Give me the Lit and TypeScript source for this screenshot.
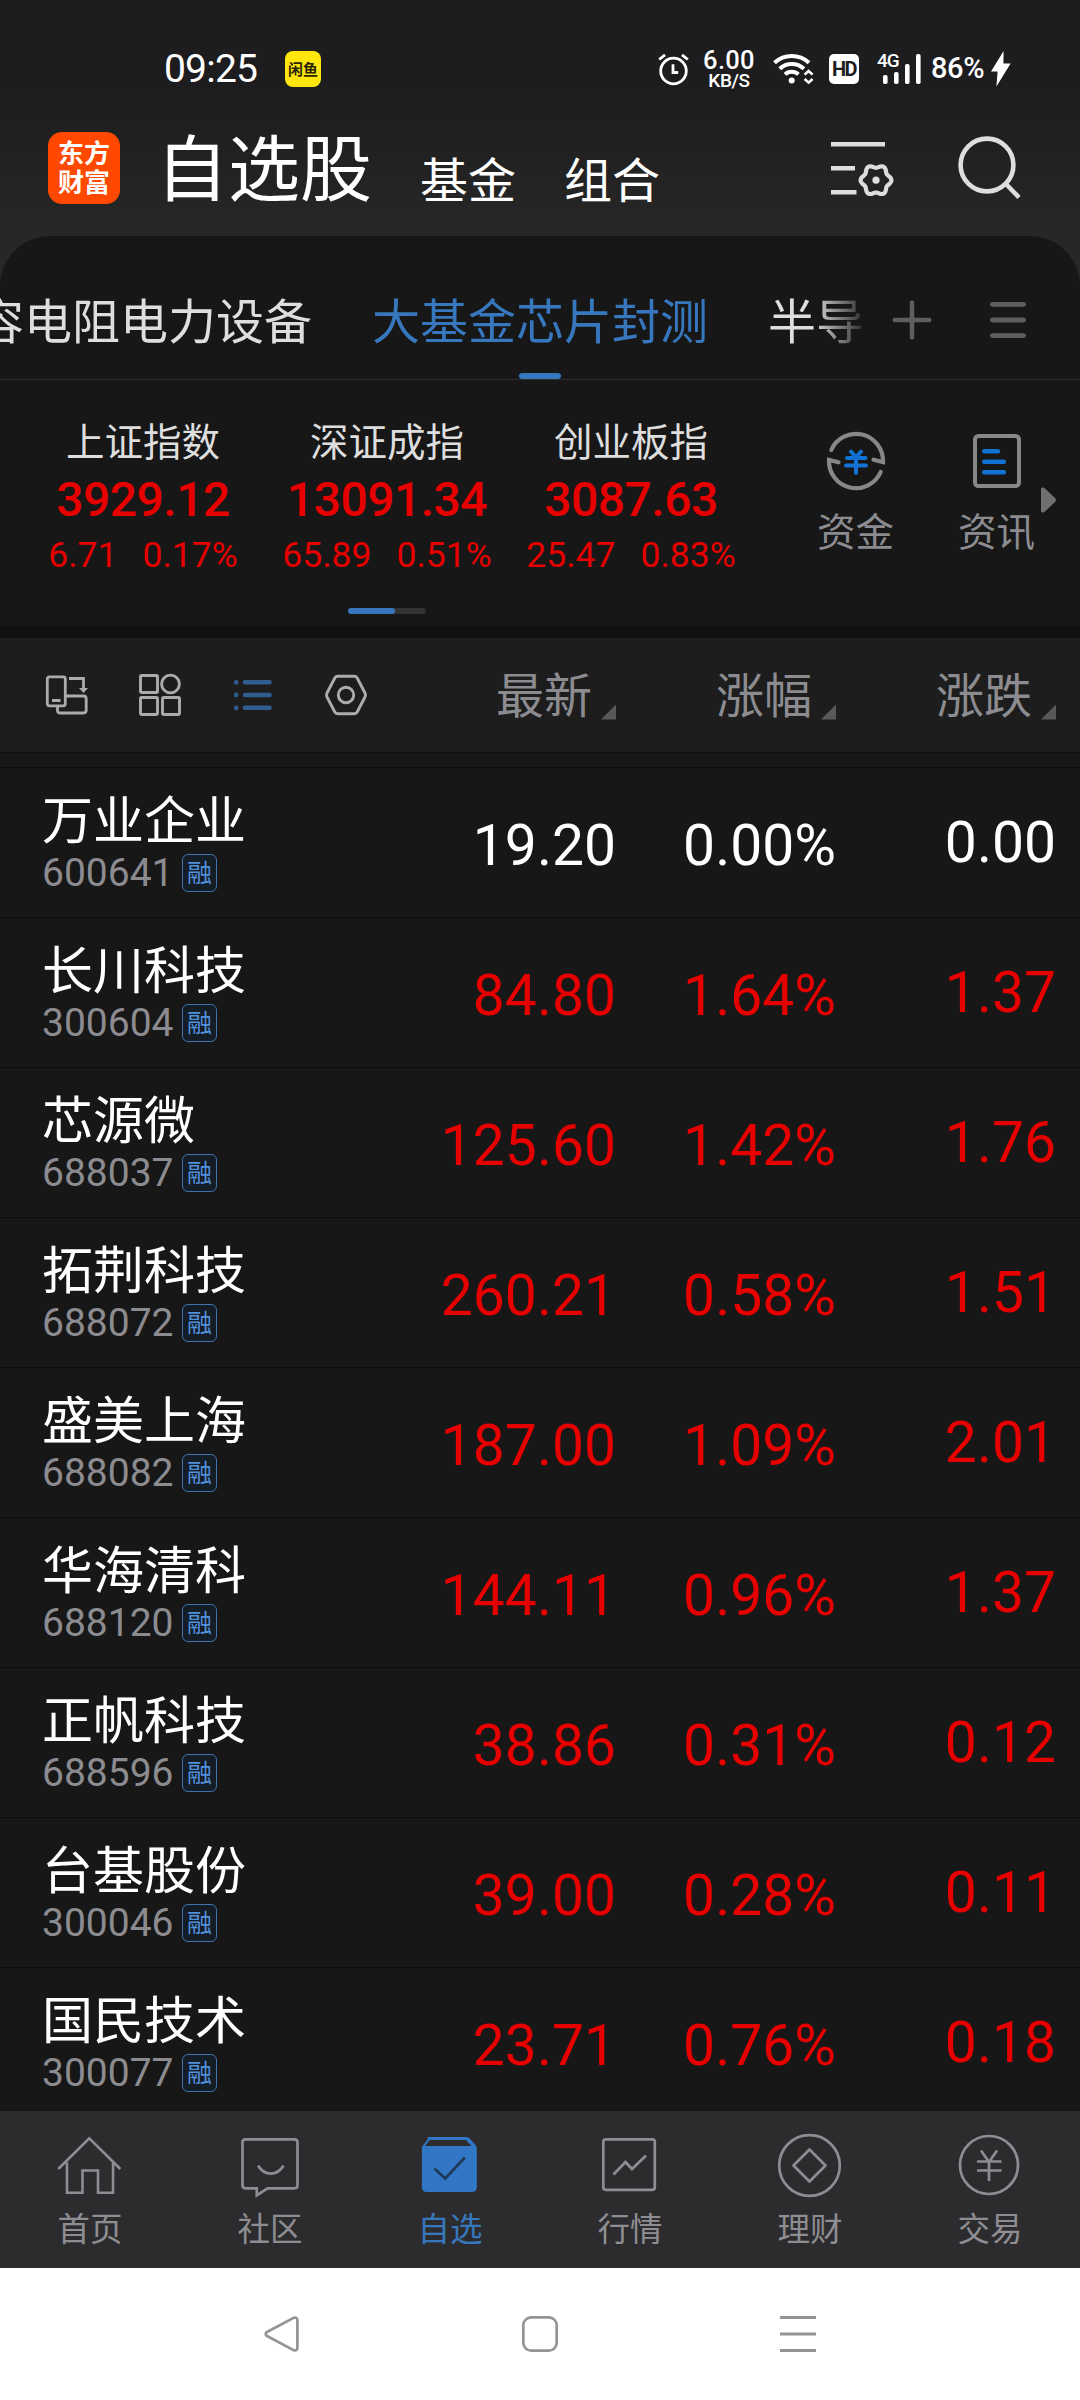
import { LitElement, html, css, svg } from "lit";
import { customElement, property } from "lit/decorators.js";
import { classMap } from "lit/directives/class-map.js";

interface Stock {
  name: string;
  code: string;
  price: string;
  pct: string;
  diff: string;
}

const STOCKS: Stock[] = [
  { name: "万业企业", code: "600641", price: "19.20", pct: "0.00%", diff: "0.00" },
  { name: "长川科技", code: "300604", price: "84.80", pct: "1.64%", diff: "1.37" },
  { name: "芯源微", code: "688037", price: "125.60", pct: "1.42%", diff: "1.76" },
  { name: "拓荆科技", code: "688072", price: "260.21", pct: "0.58%", diff: "1.51" },
  { name: "盛美上海", code: "688082", price: "187.00", pct: "1.09%", diff: "2.01" },
  { name: "华海清科", code: "688120", price: "144.11", pct: "0.96%", diff: "1.37" },
  { name: "正帆科技", code: "688596", price: "38.86", pct: "0.31%", diff: "0.12" },
  { name: "台基股份", code: "300046", price: "39.00", pct: "0.28%", diff: "0.11" },
  { name: "国民技术", code: "300077", price: "23.71", pct: "0.76%", diff: "0.18" },
];

const INDICES = [
  { name: "上证指数", value: "3929.12", diff: "6.71", pct: "0.17%" },
  { name: "深证成指", value: "13091.34", diff: "65.89", pct: "0.51%" },
  { name: "创业板指", value: "3087.63", diff: "25.47", pct: "0.83%" },
];

/** Closed outline of a gear with six soft lobes around (cx, cy). */
function gearPath(cx: number, cy: number, r: number, lobe: number): string {
  const pts: string[] = [];
  for (let i = 0; i < 120; i++) {
    const a = (i / 120) * Math.PI * 2;
    const k = r + lobe * Math.cos(6 * a);
    pts.push(`${(cx + k * Math.cos(a)).toFixed(2)} ${(cy + k * Math.sin(a)).toFixed(2)}`);
  }
  return `M${pts.join("L")}Z`;
}

const shared = css`
  * { box-sizing: border-box; }
  svg { display: block; flex: none; overflow: visible; }
  .cjk { font-family: "Noto Sans CJK SC", sans-serif; }
`;

@customElement("status-bar")
export class StatusBar extends LitElement {
  static styles = [shared, css`
    :host {
      display: flex;
      align-items: center;
      height: 104px;
      padding: 33px 69px 0 164px;
      color: #fff;
      font-family: Roboto, sans-serif;
      white-space: nowrap;
    }
    .time { width: 121px; font-size: 39px; line-height: 40px; letter-spacing: -0.8px; }
    .app {
      width: 36px; height: 36px; border-radius: 8px; background: #ffe60f; color: #2a2400;
      display: flex; align-items: center; justify-content: center;
      font-size: 15px; line-height: 15px; font-weight: 700;
    }
    .gap { flex: 1; }
    .speed { width: 54px; margin-left: 13px; padding-top: 1px; text-align: center; font-weight: 500; display: flex; flex-direction: column; }
    .num { font-size: 25.5px; line-height: 22px; letter-spacing: 0.3px; }
    .unit { font-size: 19px; line-height: 19px; letter-spacing: -0.4px; }
    .wifi { margin-left: 17px; }
    .hd {
      width: 30px; height: 30px; margin-left: 15px; border-radius: 5px; background: #fff; color: #1d1d1f;
      font-size: 20px; line-height: 31px; font-weight: 700; text-align: center; letter-spacing: -1.5px;
    }
    .signal { display: flex; margin-left: 18px; }
    .g { width: 6px; font-size: 19px; line-height: 20px; letter-spacing: -1px; font-weight: 500; align-self: flex-start; margin-top: -3px; }
    .batt { width: 59px; margin-left: 11px; font-size: 29px; line-height: 28px; font-weight: 500; letter-spacing: -0.4px; margin-top: -2px; text-indent: -1px; }
  `];
  render() {
    return html`
      <div class="time">09:25</div>
      <div class="app cjk">闲鱼</div>
      <div class="gap"></div>
      <svg width="31" height="32" viewBox="0 0 31 32" fill="none" stroke="#fff" stroke-width="2.8">
        <circle cx="15.5" cy="18" r="12.8" />
        <path d="M1.2 6.5 7 1.8M29.8 6.5 24 1.8M15 11.2v8.3h5.2" />
      </svg>
      <div class="speed"><span class="num">6.00</span><span class="unit">KB/S</span></div>
      <svg class="wifi" width="41" height="32" viewBox="0 0 41 32" fill="none" stroke="#fff" stroke-width="4">
        <path d="M1.5 9.8a25.5 25.5 0 0 1 34.5 0M6.7 15.7a17.6 17.6 0 0 1 24.2 0M12 21.4a9.8 9.8 0 0 1 13.4 0" />
        <circle cx="18.7" cy="27.6" r="3" fill="#fff" stroke="none" />
        <path d="M31.6 21.6 35.6 18l4 3.6M31.6 26l4 3.6 4-3.6" stroke-width="2.6" />
      </svg>
      <div class="hd">HD</div>
      <div class="signal">
        <span class="g">4G</span>
        <svg width="38" height="30" viewBox="0 0 38 30" fill="#fff">
          <rect x="0" y="21" width="4.6" height="9" rx="1.8" />
          <rect x="11" y="18" width="4.6" height="12" rx="1.8" />
          <rect x="22" y="10" width="4.6" height="20" rx="1.8" />
          <rect x="33" y="0" width="4.6" height="30" rx="1.8" />
        </svg>
      </div>
      <div class="batt">86%</div>
      <svg width="20" height="36" viewBox="0 0 20 36" fill="#fff"><path d="M12.600 0 0 20.500h6.600L5.400 35.500 19.600 12.400h-7.200z" /></svg>
    `;
  }
}

@customElement("title-bar")
export class TitleBar extends LitElement {
  static styles = [shared, css`
    :host { display: flex; align-items: center; height: 128px; padding: 0 59px 0 48px; color: #fff; white-space: nowrap; }
    .logo {
      width: 72px; height: 72px; border-radius: 14px; background: #ff4800;
      display: flex; flex-direction: column; align-items: center; justify-content: center;
      font-size: 26px; line-height: 29.5px; font-weight: 700; padding-bottom: 4px;
    }
    .main { font-size: 72px; line-height: 72px; margin: -9px 0 0 36px; }
    .sub { font-size: 48px; line-height: 48px; margin: 18px 0 0 48px; }
    .gap { flex: 1; }
    .search { margin-left: 64px; }
  `];
  render() {
    return html`
      <div class="logo cjk"><span>东方</span><span>财富</span></div>
      <div class="main cjk">自选股</div>
      <div class="sub cjk">基金</div>
      <div class="sub cjk">组合</div>
      <div class="gap"></div>
      <svg width="63" height="64" viewBox="0 0 63 64" fill="none" stroke="#dedede" stroke-width="4.6">
        <path d="M0 8.300h54M0 32.300h24M0 56.300h25.500" />
        <path stroke-linejoin="round" stroke-width="4.200" d=${gearPath(45, 44.2, 13.9, 1.5)} />
        <circle cx="45" cy="44.200" r="3.600" fill="#dedede" stroke="none" />
      </svg>
      <svg class="search" width="63" height="64" viewBox="0 0 63 64" fill="none" stroke="#dedede" stroke-width="4.600">
        <circle cx="29" cy="29" r="26.400" /><path d="M47.500 47.500 61 61.500" />
      </svg>
    `;
  }
}

@customElement("group-tabs")
export class GroupTabs extends LitElement {
  static styles = [shared, css`
    :host { display: flex; height: 144px; border-bottom: 1px solid #2e2e2e; color: #dedede; }
    .scroll {
      width: 864px; display: flex; justify-content: flex-end; overflow: hidden; white-space: nowrap;
      -webkit-mask-image: linear-gradient(90deg, #000 812px, transparent 870px);
      mask-image: linear-gradient(90deg, #000 812px, transparent 870px);
      font-size: 48px; line-height: 48px; gap: 60px;
    }
    .tab { flex: none; height: 143px; padding-top: 58px; display: flex; flex-direction: column; align-items: center; }
    .on { color: #3777bd; }
    .bar { width: 42px; height: 6px; border-radius: 3px; background: #3777bd; margin-top: auto; }
    .tools { display: flex; align-items: center; gap: 58px; padding: 24px 0 0 28px; }
  `];
  render() {
    return html`
      <div class="scroll cjk">
        <div class="tab">容电阻电力设备</div>
        <div class="tab on">大基金芯片封测<span class="bar"></span></div>
        <div class="tab">半导</div>
      </div>
      <div class="tools">
        <svg width="40" height="40" viewBox="0 0 40 40" fill="none" stroke="#5e5e5e" stroke-width="4.500" stroke-linecap="round"><path d="M20 2.500v35M2.800 20h34.400" /></svg>
        <svg width="36" height="36" viewBox="0 0 36 36" fill="none" stroke="#5e5e5e" stroke-width="4.800" stroke-linecap="round"><path d="M2.400 2.400h31.200M2.400 18h31.200M2.400 33.600h31.200" /></svg>
      </div>
    `;
  }
}

@customElement("index-board")
export class IndexBoard extends LitElement {
  static styles = [shared, css`
    :host { display: flex; height: 246px; padding-left: 21px; border-bottom: 1px solid #141414; }
    .left { width: 732px; display: flex; flex-direction: column; }
    .cells { display: flex; }
    .cell { width: 244px; height: 228px; padding-top: 40px; text-align: center; color: #e60000; font-family: Roboto, sans-serif; white-space: nowrap; }
    .name { font-size: 38.500px; line-height: 38px; color: #dedede; }
    .value { font-size: 48px; line-height: 50px; font-weight: 500; margin-top: 17px; letter-spacing: -0.500px; }
    .sub { display: flex; justify-content: center; gap: 25px; font-size: 35.500px; line-height: 36px; margin-top: 12px; }
    .track { width: 78px; height: 6px; border-radius: 3px; background: #333; align-self: center; }
    .thumb { width: 47px; height: 6px; border-radius: 3px; background: #3777bd; }
    .tool { width: 141px; padding-top: 50px; display: flex; flex-direction: column; align-items: center; color: #8c8c90; }
    .first { margin-left: 32px; }
    .label { font-size: 38.500px; line-height: 38px; margin-top: 18px; white-space: nowrap; }
    .arrow { margin: 107px 0 0 -26px; }
  `];
  render() {
    return html`
      <div class="left">
        <div class="cells">
          ${INDICES.map((i) => html`
            <div class="cell">
              <div class="name cjk">${i.name}</div>
              <div class="value">${i.value}</div>
              <div class="sub"><span>${i.diff}</span><span>${i.pct}</span></div>
            </div>`)}
        </div>
        <div class="track"><div class="thumb"></div></div>
      </div>
      <div class="tool first">
        <svg width="60" height="62" viewBox="0 0 60 62" fill="none" stroke="#878787" stroke-width="4.200" stroke-linecap="round">
          <path d="M5.300 20A27 27 0 0 1 57 32L47.500 29.700" />
          <path d="M54.700 42A27 27 0 0 1 3 30L12.500 32.300" />
          <path stroke="#1272d4" stroke-width="4" d="M25 21.500l5 5.500 5-5.500M21 28h18.500M20 35.500h20M30 28v15" />
        </svg>
        <div class="label cjk">资金</div>
      </div>
      <div class="tool">
        <svg width="48" height="62" viewBox="0 0 48 62" fill="none" stroke-linecap="round">
          <rect x="2" y="6" width="44" height="50" rx="3.500" stroke="#878787" stroke-width="4" />
          <path stroke="#1272d4" stroke-width="4.600" d="M11.300 21.200h13.500M11.300 31.700h19.500M11.300 42.200h19.500" />
        </svg>
        <div class="label cjk">资讯</div>
      </div>
      <svg class="arrow" width="15" height="26" viewBox="0 0 15 26" fill="#707070"><path d="M0 1.500Q1.500-.3 4 1.500L14.300 11.300Q15.700 13 14.300 14.700L4 24.500Q1.500 26.300 0 24.500Z" /></svg>
    `;
  }
}

@customElement("list-header")
export class ListHeader extends LitElement {
  static styles = [shared, css`
    :host {
      display: flex; height: 115px; padding: 0 24px 0 46px; background: #1d1d1d;
      border-bottom: 1px solid #101010; align-items: center;
    }
    .views { display: flex; align-items: center; gap: 51px; }
    .cols { flex: 1; display: flex; justify-content: flex-end; margin-top: -7px; }
    .col { width: 220px; display: flex; align-items: center; justify-content: flex-end; gap: 9px; color: #8c8c90; font-size: 48px; line-height: 48px; }
    .tri { width: 15px; height: 15px; background: #59595b; clip-path: polygon(100% 0, 100% 100%, 0 100%); align-self: flex-end; margin-bottom: -4px; }
  `];
  render() {
    return html`
      <div class="views">
        <svg width="42" height="42" viewBox="0 0 42 42" fill="none" stroke="#acacac" stroke-width="2.800">
          <rect x="1.300" y="2.800" width="18" height="29" rx="2" />
          <path d="M6 26.500h8.500M19.300 22h18.200q2.700 0 2.700 2.700v11.600q0 2.700-2.700 2.700H13.700q-2.200 0-2.200-2.400V32" />
          <path d="M23 4.500h14.500v12" /><path fill="#acacac" stroke="none" d="M33 14h9l-4.500 5z" />
        </svg>
        <svg width="42" height="42" viewBox="0 0 42 42" fill="none" stroke="#acacac" stroke-width="2.900">
          <rect x="1.500" y="1.500" width="17" height="17" rx="1" /><circle cx="31.500" cy="10" r="8.900" />
          <rect x="1.500" y="23.500" width="17" height="17" rx="1" /><rect x="23.500" y="23.500" width="17" height="17" rx="1" />
        </svg>
        <svg width="42" height="42" viewBox="0 0 42 42" fill="none" stroke="#2f5d90" stroke-width="4.600" stroke-linecap="round">
          <path d="M13 8.300h24.500M13 21h24.500M13 33.800h24.500M4.200 8.200v.2M4.200 20.900v.2M4.200 33.700v.2" />
        </svg>
        <svg width="42" height="42" viewBox="0 0 42 42" fill="none" stroke="#acacac" stroke-width="2.900">
          <path stroke-linejoin="round" d="M12.800 2.300h16.400q2 0 3 1.700l7.800 15q1 2 0 4l-7.800 15q-1 1.700-3 1.700H12.800q-2 0-3-1.700l-7.800-15q-1-2 0-4l7.800-15q1-1.700 3-1.700z" />
          <circle cx="21" cy="21" r="7.700" />
        </svg>
      </div>
      <div class="cols cjk">
        ${["最新", "涨幅", "涨跌"].map((t) => html`<div class="col">${t}<i class="tri"></i></div>`)}
      </div>
    `;
  }
}

@customElement("stock-row")
export class StockRow extends LitElement {
  @property({ attribute: false }) stock!: Stock;
  static styles = [shared, css`
    :host {
      display: flex; height: 150px; padding: 0 24px 0 42px; border-bottom: 1px solid #0d0d0d;
      font-family: Roboto, sans-serif; white-space: nowrap; color: #e60000; font-size: 57px; line-height: 58px;
    }
    .id { width: 374px; padding-top: 23px; }
    .name { color: #fff; font-size: 51px; line-height: 52px; }
    .meta { display: flex; align-items: center; height: 38px; margin-top: 11px; }
    .code { color: #8c8c90; font-size: 39px; line-height: 38px; width: 140px; }
    .badge {
      width: 35px; height: 38px; border: 1.500px solid #3f74ad; border-radius: 6px; background: #141c26; color: #5292dd;
      font-size: 25px; line-height: 32px; text-align: center;
    }
    .n { flex: none; text-align: right; padding-top: 49px; }
    .price { width: 200px; }
    .pct { width: 220px; }
    .diff { width: 220px; padding-top: 46px; }
    .flat { color: #fff; }
  `];
  render() {
    const s = this.stock;
    const flat = { flat: parseFloat(s.diff) === 0 };
    return html`
      <div class="id">
        <div class="name cjk">${s.name}</div>
        <div class="meta"><span class="code">${s.code}</span><span class="badge cjk">融</span></div>
      </div>
      <div class=${classMap({ n: true, price: true, ...flat })}>${s.price}</div>
      <div class=${classMap({ n: true, pct: true, ...flat })}>${s.pct}</div>
      <div class=${classMap({ n: true, diff: true, ...flat })}>${s.diff}</div>
    `;
  }
}

const NAV = [
  { label: "首页", icon: svg`<path d="M2 34 34 2.500 66 34M11 27v31.500h16v-23h16v23h15.500V27" transform="translate(.3 2) scale(.97)" />` },
  { label: "社区", icon: svg`<path d="M9.500 5.300h49q3 0 3 3v43q0 3-3 3H31.500L20.800 61.300V54.300H9.500q-3 0-3-3v-43q0-3 3-3z" /><path d="M22 31.500q5 8.200 12.800 8.200t12.800-8.200" />` },
  { label: "自选", icon: svg`<g transform="translate(-1.600 0)"><path fill="#3277c6" stroke="none" d="M13.500 3h38.500q2 0 3.400 1.500l6 7q1 1.300 1 3V53q0 5-5 5H12.500q-5 0-5-5V14.500q0-1.700 1-3l5.500-7Q11.500 3 13.500 3z" /><path fill="#2c2c2e" stroke="none" d="M15.500 6h36l5.500 6H10.500z" /><path stroke="#1f3a58" d="M20 34.500 30.800 44.500 50.500 23.500" /></g>` },
  { label: "行情", icon: svg`<g transform="translate(-1 0)"><rect x="8.300" y="5.300" width="51.500" height="50.500" rx="2.500" /><path d="M18.500 40.500 30.500 28l6.500 7L51 21.500" /></g>` },
  { label: "理财", icon: svg`<circle cx="33.500" cy="31.500" r="30.300" /><path stroke-linejoin="round" d="M33.500 15.500 49.500 31.500 33.500 47.500 17.500 31.500z" />` },
  { label: "交易", icon: svg`<circle cx="33" cy="31" r="29" /><path d="M25 16.500l8 11.500 8-11.500M21 27.500h24.500M21 36.500h24.500M33 27.500V47" />` },
];

@customElement("bottom-nav")
export class BottomNav extends LitElement {
  static styles = [shared, css`
    :host { display: flex; height: 157px; background: #2c2c2e; }
    .item { width: 180px; padding-top: 23px; display: flex; flex-direction: column; align-items: center; color: #8e8e92; }
    .label { font-size: 32.500px; line-height: 34px; margin-top: 12px; }
    .on { color: #3777bd; }
  `];
  render() {
    return html`${NAV.map((n) => html`
      <div class=${classMap({ item: true, on: n.label === "自选" })}>
        <svg width="68" height="64" viewBox="0 0 68 64" fill="none" stroke="#8e8e92" stroke-width="2.700">${n.icon}</svg>
        <span class="label cjk">${n.label}</span>
      </div>`)}`;
  }
}

@customElement("app-root")
export class AppRoot extends LitElement {
  static styles = [shared, css`
    :host { display: flex; flex-direction: column; width: 1080px; height: 2400px; overflow: hidden; background: #171717; }
    .head { height: 286px; flex: none; margin-bottom: -50px; background: linear-gradient(#1d1d1f 0, #1d1d1f 90px, #272727 236px); }
    .panel { background: #171717; border-radius: 50px 50px 0 0; }
    .band { height: 12px; background: #111; }
    .strip { height: 15px; border-bottom: 1px solid #0d0d0d; }
    .list { flex: 1; min-height: 0; overflow: hidden; }
    .keys { height: 132px; flex: none; background: #fff; display: flex; align-items: center; justify-content: space-between; padding: 0 264px; }
  `];
  render() {
    return html`
      <div class="head"><status-bar></status-bar><title-bar></title-bar></div>
      <div class="panel"><group-tabs></group-tabs><index-board></index-board></div>
      <div class="band"></div>
      <list-header></list-header>
      <div class="strip"></div>
      <div class="list">${STOCKS.map((s) => html`<stock-row .stock=${s}></stock-row>`)}</div>
      <bottom-nav></bottom-nav>
      <div class="keys">
        <svg width="36" height="36" viewBox="0 0 36 36" fill="none" stroke="#949494" stroke-width="2.700"><path stroke-linejoin="round" d="M2.600 16.200 29.500 1.900Q33.200.8 33.400 4v28q-.2 3.200-3.900 2.100L2.600 19.800Q.8 18 2.600 16.200z" /></svg>
        <svg width="36" height="36" viewBox="0 0 36 36" fill="none" stroke="#949494" stroke-width="2.700"><rect x="1.300" y="1.300" width="33.400" height="33.400" rx="8" /></svg>
        <svg width="36" height="36" viewBox="0 0 36 36" fill="none" stroke="#949494" stroke-width="2.900"><path d="M0 1.500h36M0 18h36M0 34.500h36" /></svg>
      </div>
    `;
  }
}
